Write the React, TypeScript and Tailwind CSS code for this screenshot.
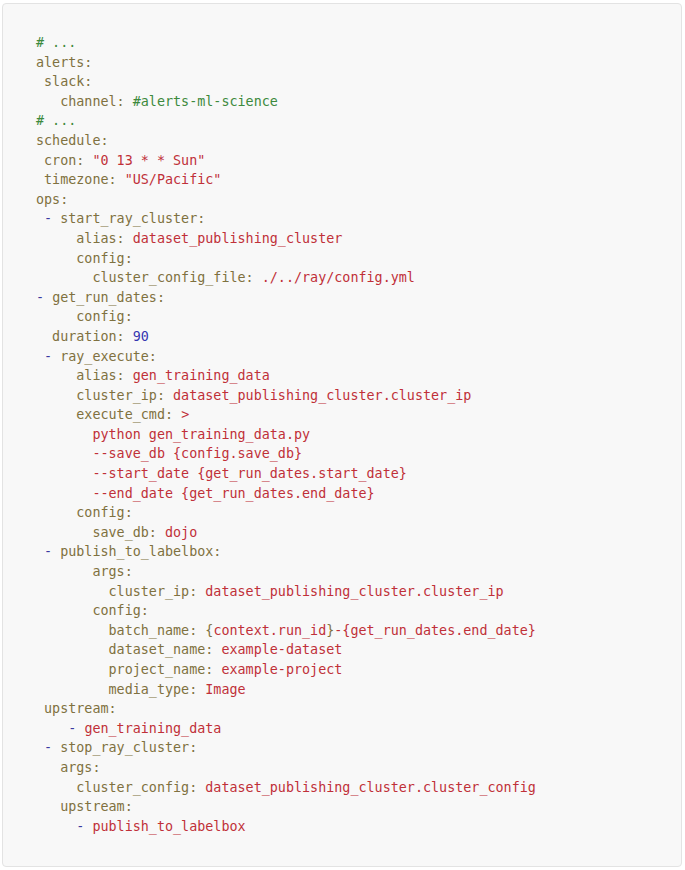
import React from 'react';

type Tok = [string, string];

// token colours
const C = 'text-[#3d8a3d]'; // comment / slack channel
const K = 'text-[#7f7140]'; // key
const V = 'text-[#c03038]'; // string value
const D = 'text-[#3a3aa0]'; // list dash
const N = 'text-[#3535b0]'; // number

const lines: Tok[][] = [
  [[C, '# ...']],
  [[K, 'alerts:']],
  [[K, ' slack:']],
  [[K, '   channel: '], [C, '#alerts-ml-science']],
  [[C, '# ...']],
  [[K, 'schedule:']],
  [[K, ' cron: '], [V, '"0 13 * * Sun"']],
  [[K, ' timezone: '], [V, '"US/Pacific"']],
  [[K, 'ops:']],
  [[D, ' - '], [K, 'start_ray_cluster:']],
  [[K, '     alias: '], [V, 'dataset_publishing_cluster']],
  [[K, '     config:']],
  [[K, '       cluster_config_file: '], [V, './../ray/config.yml']],
  [[D, '- '], [K, 'get_run_dates:']],
  [[K, '     config:']],
  [[K, '  duration: '], [N, '90']],
  [[D, ' - '], [K, 'ray_execute:']],
  [[K, '     alias: '], [V, 'gen_training_data']],
  [[K, '     cluster_ip: '], [V, 'dataset_publishing_cluster.cluster_ip']],
  [[K, '     execute_cmd: '], [V, '>']],
  [[V, '       python gen_training_data.py']],
  [[V, '       --save_db {config.save_db}']],
  [[V, '       --start_date {get_run_dates.start_date}']],
  [[V, '       --end_date {get_run_dates.end_date}']],
  [[K, '     config:']],
  [[K, '       save_db: '], [V, 'dojo']],
  [[D, ' - '], [K, 'publish_to_labelbox:']],
  [[K, '       args:']],
  [[K, '         cluster_ip: '], [V, 'dataset_publishing_cluster.cluster_ip']],
  [[K, '       config:']],
  [[K, '         batch_name: '], [K, '{'], [V, 'context.run_id'], [K, '}'], [V, '-{get_run_dates.end_date}']],
  [[K, '         dataset_name: '], [V, 'example-dataset']],
  [[K, '         project_name: '], [V, 'example-project']],
  [[K, '         media_type: '], [V, 'Image']],
  [[K, ' upstream:']],
  [[D, '    - '], [V, 'gen_training_data']],
  [[D, ' - '], [K, 'stop_ray_cluster:']],
  [[K, '   args:']],
  [[K, '     cluster_config: '], [V, 'dataset_publishing_cluster.cluster_config']],
  [[K, '   upstream:']],
  [[D, '     - '], [V, 'publish_to_labelbox']],
];

export default function App() {
  return (
    <div className="w-[685px] h-[870px] bg-white pt-[3px] pl-[2px]">
      <div className="w-[680px] h-[864px] bg-[#f8f8f8] border border-[#e3e3e3] rounded-[4px] pt-[29px] pl-[33px]">
        <pre className="font-['DejaVu_Sans_Mono',monospace] text-[13.4px] leading-[19.6px]">
          {lines.map((toks, i) => (
            <div key={i} className="whitespace-pre">
              {toks.map(([cls, txt], j) => (
                <span key={j} className={cls}>{txt}</span>
              ))}
            </div>
          ))}
        </pre>
      </div>
    </div>
  );
}
